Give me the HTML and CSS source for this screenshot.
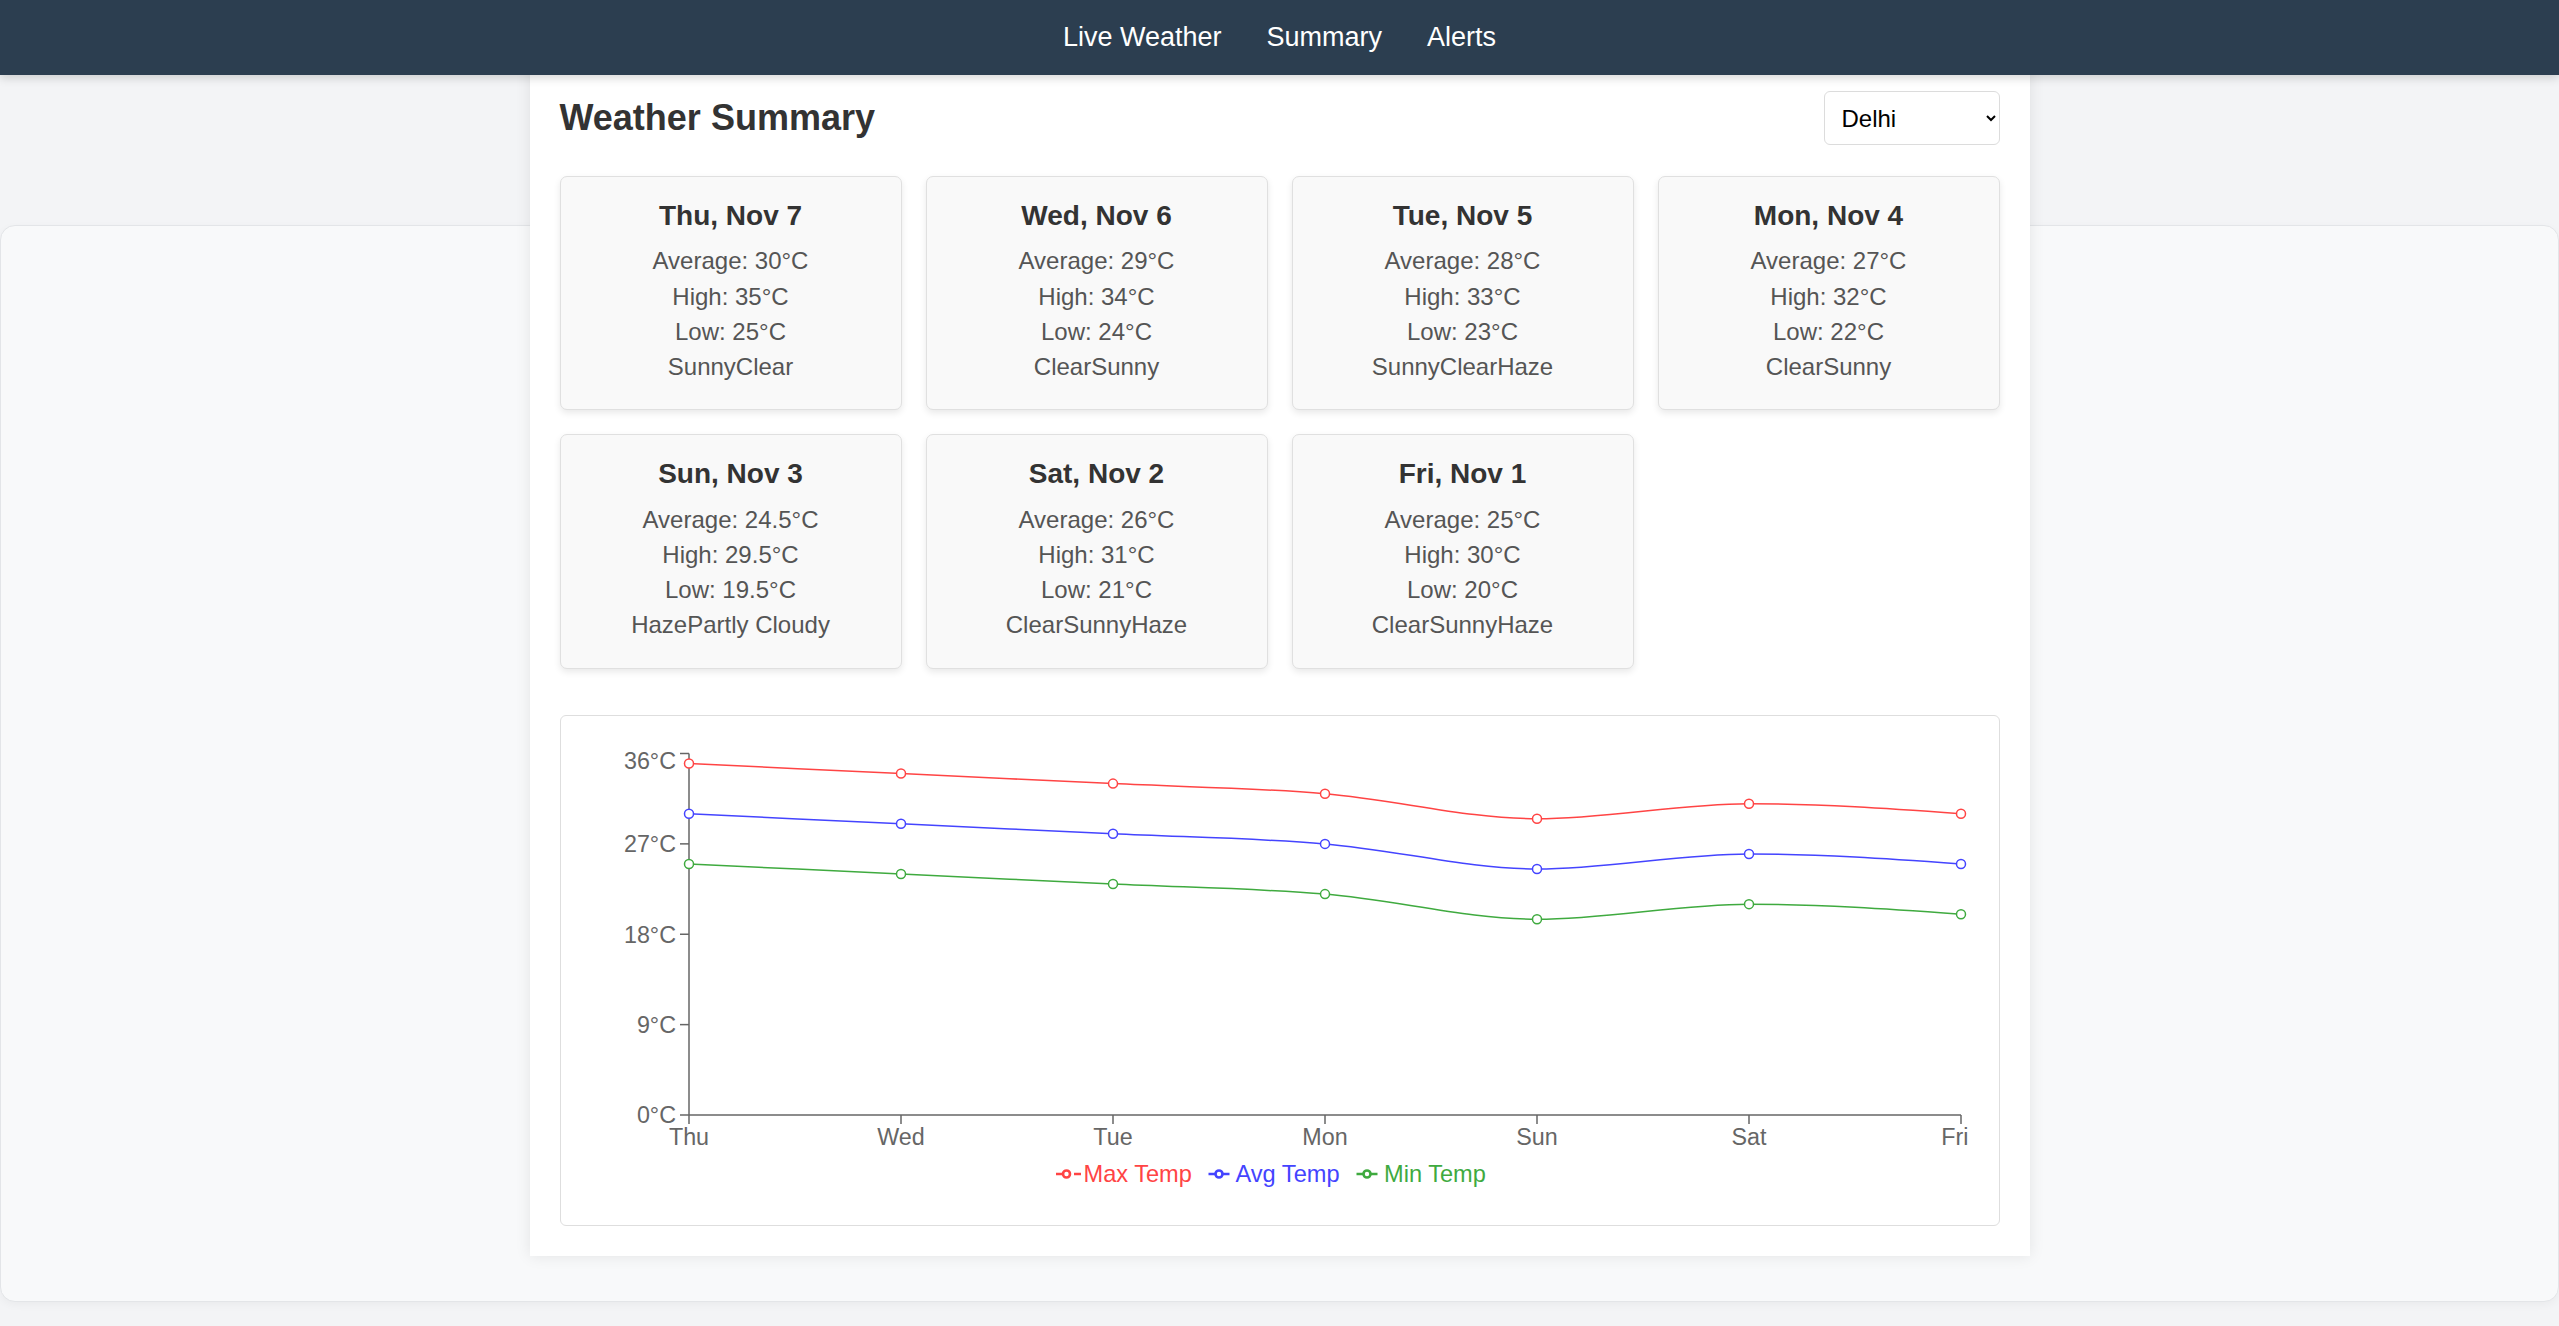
FILE: index.html
```html
<!DOCTYPE html>
<html lang="en">
<head>
<meta charset="utf-8">
<title>Weather Summary</title>
<link rel="stylesheet" href="styles.css">
</head>
<body>
<nav class="navbar">
  <a class="nav-link" href="#">Live Weather</a>
  <a class="nav-link" href="#">Summary</a>
  <a class="nav-link" href="#">Alerts</a>
</nav>

<main class="backdrop"></main>

<section class="summary-card">
  <div class="summary-header">
    <h2 class="summary-title">Weather Summary</h2>
    <select class="city-select">
      <option>Delhi</option>
      <option>Mumbai</option>
      <option>Chennai</option>
      <option>Bangalore</option>
      <option>Kolkata</option>
      <option>Hyderabad</option>
    </select>
  </div>

  <div class="day-grid">
    <div class="day-card">
      <h3 class="day-title">Thu, Nov 7</h3>
      <p class="day-line">Average: 30°C</p>
      <p class="day-line">High: 35°C</p>
      <p class="day-line">Low: 25°C</p>
      <p class="day-line">SunnyClear</p>
    </div>
    <div class="day-card">
      <h3 class="day-title">Wed, Nov 6</h3>
      <p class="day-line">Average: 29°C</p>
      <p class="day-line">High: 34°C</p>
      <p class="day-line">Low: 24°C</p>
      <p class="day-line">ClearSunny</p>
    </div>
    <div class="day-card">
      <h3 class="day-title">Tue, Nov 5</h3>
      <p class="day-line">Average: 28°C</p>
      <p class="day-line">High: 33°C</p>
      <p class="day-line">Low: 23°C</p>
      <p class="day-line">SunnyClearHaze</p>
    </div>
    <div class="day-card">
      <h3 class="day-title">Mon, Nov 4</h3>
      <p class="day-line">Average: 27°C</p>
      <p class="day-line">High: 32°C</p>
      <p class="day-line">Low: 22°C</p>
      <p class="day-line">ClearSunny</p>
    </div>
    <div class="day-card">
      <h3 class="day-title">Sun, Nov 3</h3>
      <p class="day-line">Average: 24.5°C</p>
      <p class="day-line">High: 29.5°C</p>
      <p class="day-line">Low: 19.5°C</p>
      <p class="day-line">HazePartly Cloudy</p>
    </div>
    <div class="day-card">
      <h3 class="day-title">Sat, Nov 2</h3>
      <p class="day-line">Average: 26°C</p>
      <p class="day-line">High: 31°C</p>
      <p class="day-line">Low: 21°C</p>
      <p class="day-line">ClearSunnyHaze</p>
    </div>
    <div class="day-card">
      <h3 class="day-title">Fri, Nov 1</h3>
      <p class="day-line">Average: 25°C</p>
      <p class="day-line">High: 30°C</p>
      <p class="day-line">Low: 20°C</p>
      <p class="day-line">ClearSunnyHaze</p>
    </div>
  </div>

  <div class="chart-box">
    <svg class="chart" width="1378" height="449" viewBox="0 0 1378 449" xmlns="http://www.w3.org/2000/svg">
      <!-- axes -->
      <g class="axis">
        <line x1="98" y1="7.5" x2="98" y2="369"/>
        <line x1="89" y1="7.5" x2="98" y2="7.5"/>
        <line x1="89" y1="97.87" x2="98" y2="97.87"/>
        <line x1="89" y1="188.25" x2="98" y2="188.25"/>
        <line x1="89" y1="278.62" x2="98" y2="278.62"/>
        <line x1="89" y1="369" x2="98" y2="369"/>
        <line x1="98" y1="369" x2="1370" y2="369"/>
        <line x1="98" y1="369" x2="98" y2="378"/>
        <line x1="310" y1="369" x2="310" y2="378"/>
        <line x1="522" y1="369" x2="522" y2="378"/>
        <line x1="734" y1="369" x2="734" y2="378"/>
        <line x1="946" y1="369" x2="946" y2="378"/>
        <line x1="1158" y1="369" x2="1158" y2="378"/>
        <line x1="1370" y1="369" x2="1370" y2="378"/>
      </g>
      <g class="tick-label y-label">
        <text x="85" y="23">36°C</text>
        <text x="85" y="106.3">27°C</text>
        <text x="85" y="196.6">18°C</text>
        <text x="85" y="287">9°C</text>
        <text x="85" y="377.4">0°C</text>
      </g>
      <g class="tick-label x-label">
        <text x="98" y="398.5">Thu</text>
        <text x="310" y="398.5">Wed</text>
        <text x="522" y="398.5">Tue</text>
        <text x="734" y="398.5">Mon</text>
        <text x="946" y="398.5">Sun</text>
        <text x="1158" y="398.5">Sat</text>
        <text class="x-last" x="1377.5" y="398.5">Fri</text>
      </g>

      <!-- series -->
      <g class="series series-max">
        <path class="series-line" d="M98,17.54 C168.67,20.89 239.33,24.24 310,27.58 C380.67,30.93 451.33,34.28 522,37.62 C592.67,40.97 663.33,41.81 734,47.67 C804.67,53.52 875.33,72.77 946,72.77 C1016.67,72.77 1087.33,57.71 1158,57.71 C1228.67,57.71 1299.33,62.73 1370,67.75"/>
        <circle cx="98" cy="17.54" r="4.5"/>
        <circle cx="310" cy="27.58" r="4.5"/>
        <circle cx="522" cy="37.62" r="4.5"/>
        <circle cx="734" cy="47.67" r="4.5"/>
        <circle cx="946" cy="72.77" r="4.5"/>
        <circle cx="1158" cy="57.71" r="4.5"/>
        <circle cx="1370" cy="67.75" r="4.5"/>
      </g>
      <g class="series series-avg" transform="translate(0 50.21)">
        <path class="series-line" d="M98,17.54 C168.67,20.89 239.33,24.24 310,27.58 C380.67,30.93 451.33,34.28 522,37.62 C592.67,40.97 663.33,41.81 734,47.67 C804.67,53.52 875.33,72.77 946,72.77 C1016.67,72.77 1087.33,57.71 1158,57.71 C1228.67,57.71 1299.33,62.73 1370,67.75"/>
        <circle cx="98" cy="17.54" r="4.5"/>
        <circle cx="310" cy="27.58" r="4.5"/>
        <circle cx="522" cy="37.62" r="4.5"/>
        <circle cx="734" cy="47.67" r="4.5"/>
        <circle cx="946" cy="72.77" r="4.5"/>
        <circle cx="1158" cy="57.71" r="4.5"/>
        <circle cx="1370" cy="67.75" r="4.5"/>
      </g>
      <g class="series series-min" transform="translate(0 100.42)">
        <path class="series-line" d="M98,17.54 C168.67,20.89 239.33,24.24 310,27.58 C380.67,30.93 451.33,34.28 522,37.62 C592.67,40.97 663.33,41.81 734,47.67 C804.67,53.52 875.33,72.77 946,72.77 C1016.67,72.77 1087.33,57.71 1158,57.71 C1228.67,57.71 1299.33,62.73 1370,67.75"/>
        <circle cx="98" cy="17.54" r="4.5"/>
        <circle cx="310" cy="27.58" r="4.5"/>
        <circle cx="522" cy="37.62" r="4.5"/>
        <circle cx="734" cy="47.67" r="4.5"/>
        <circle cx="946" cy="72.77" r="4.5"/>
        <circle cx="1158" cy="57.71" r="4.5"/>
        <circle cx="1370" cy="67.75" r="4.5"/>
      </g>

      <!-- legend -->
      <g class="legend legend-max">
        <path class="legend-icon" d="M465,428 h7 M483,428 h7"/>
        <circle class="legend-icon" cx="475.5" cy="428" r="3.5"/>
        <text x="492.5" y="436.3">Max Temp</text>
      </g>
      <g class="legend legend-avg">
        <path class="legend-icon" d="M617.5,428 h7 M631.5,428 h7"/>
        <circle class="legend-icon" cx="628" cy="428" r="3.5"/>
        <text x="644.5" y="436.3">Avg Temp</text>
      </g>
      <g class="legend legend-min">
        <path class="legend-icon" d="M765.5,428 h7 M779.5,428 h7"/>
        <circle class="legend-icon" cx="776" cy="428" r="3.5"/>
        <text x="793" y="436.3">Min Temp</text>
      </g>
    </svg>
  </div>
</section>
</body>
</html>
```

FILE: styles.css
```css
* {
  box-sizing: border-box;
}

html, body {
  margin: 0;
  padding: 0;
}

body {
  position: relative;
  min-height: 1326px;
  background: #f3f4f6;
  font-family: "Liberation Sans", Arial, Helvetica, sans-serif;
  color: #333;
}

.navbar {
  position: relative;
  z-index: 10;
  height: 75px;
  background: #2c3e50;
  display: flex;
  align-items: center;
  justify-content: center;
  gap: 45px;
  box-shadow: 0 3px 9px rgba(0, 0, 0, 0.16);
}

.nav-link {
  color: #ffffff;
  text-decoration: none;
  font-size: 27px;
  line-height: 1.15;
}

.backdrop {
  display: block;
  margin-top: 150px;
  height: 1077px;
  background: #f8f9fa;
  border: 1px solid #e3e5e8;
  border-radius: 15px;
  box-shadow: 0 3px 8px rgba(0, 0, 0, 0.04);
}

.summary-card {
  position: absolute;
  z-index: 5;
  top: 61px;
  left: 0;
  right: 0;
  margin: 0 auto;
  width: 1500px;
  padding: 30px;
  background: #ffffff;
  box-shadow: 0 0 15px rgba(0, 0, 0, 0.09);
}

.summary-header {
  display: flex;
  align-items: center;
  justify-content: space-between;
  height: 54px;
}

.summary-title {
  margin: 0;
  font-size: 36px;
  font-weight: bold;
  line-height: 1.15;
  color: #333;
}

.city-select {
  width: 176px;
  height: 54px;
  padding: 0 13px;
  font-family: "Liberation Sans", Arial, sans-serif;
  font-size: 24px;
  color: #000;
  background-color: #ffffff;
  border: 1px solid #dcdcdc;
  border-radius: 6px;
}

.day-grid {
  margin-top: 31px;
  display: grid;
  grid-template-columns: repeat(4, 1fr);
  gap: 24px;
}

.day-card {
  background: #f9f9f9;
  border: 1px solid #e0e0e0;
  border-radius: 7px;
  padding: 23px 23px 25px;
  text-align: center;
  box-shadow: 0 3px 7px rgba(0, 0, 0, 0.09);
}

.day-title {
  margin: 0 0 11px;
  font-size: 28px;
  line-height: 32.2px;
  font-weight: bold;
  color: #333;
}

.day-line {
  margin: 0;
  font-size: 24px;
  line-height: 35.3px;
  color: #555;
}

.chart-box {
  margin-top: 46px;
  background: #ffffff;
  border: 1px solid #dedede;
  border-radius: 6px;
  padding: 30px;
}

.chart {
  display: block;
  overflow: visible;
}

.axis line {
  stroke: #666;
  stroke-width: 1.5;
}

.tick-label text {
  font-family: "Liberation Sans", Arial, sans-serif;
  font-size: 23.3px;
  fill: #666;
}

.y-label text {
  text-anchor: end;
}

.x-label text {
  text-anchor: middle;
}

.x-label .x-last {
  text-anchor: end;
}

.series-line {
  fill: none;
  stroke-width: 1.5;
}

.series circle {
  fill: #ffffff;
  stroke-width: 1.5;
}

.series-max .series-line,
.series-max circle {
  stroke: #ff4444;
}

.series-avg .series-line,
.series-avg circle {
  stroke: #4444ff;
}

.series-min .series-line,
.series-min circle {
  stroke: #3faa3f;
}

.legend text {
  font-family: "Liberation Sans", Arial, sans-serif;
  font-size: 23.6px;
}

.legend-icon {
  fill: none;
  stroke-width: 2.6;
}

.legend-max text { fill: #ff4444; }
.legend-max .legend-icon { stroke: #ff4444; }

.legend-avg text { fill: #4444ff; }
.legend-avg .legend-icon { stroke: #4444ff; }

.legend-min text { fill: #3faa3f; }
.legend-min .legend-icon { stroke: #3faa3f; }
```
